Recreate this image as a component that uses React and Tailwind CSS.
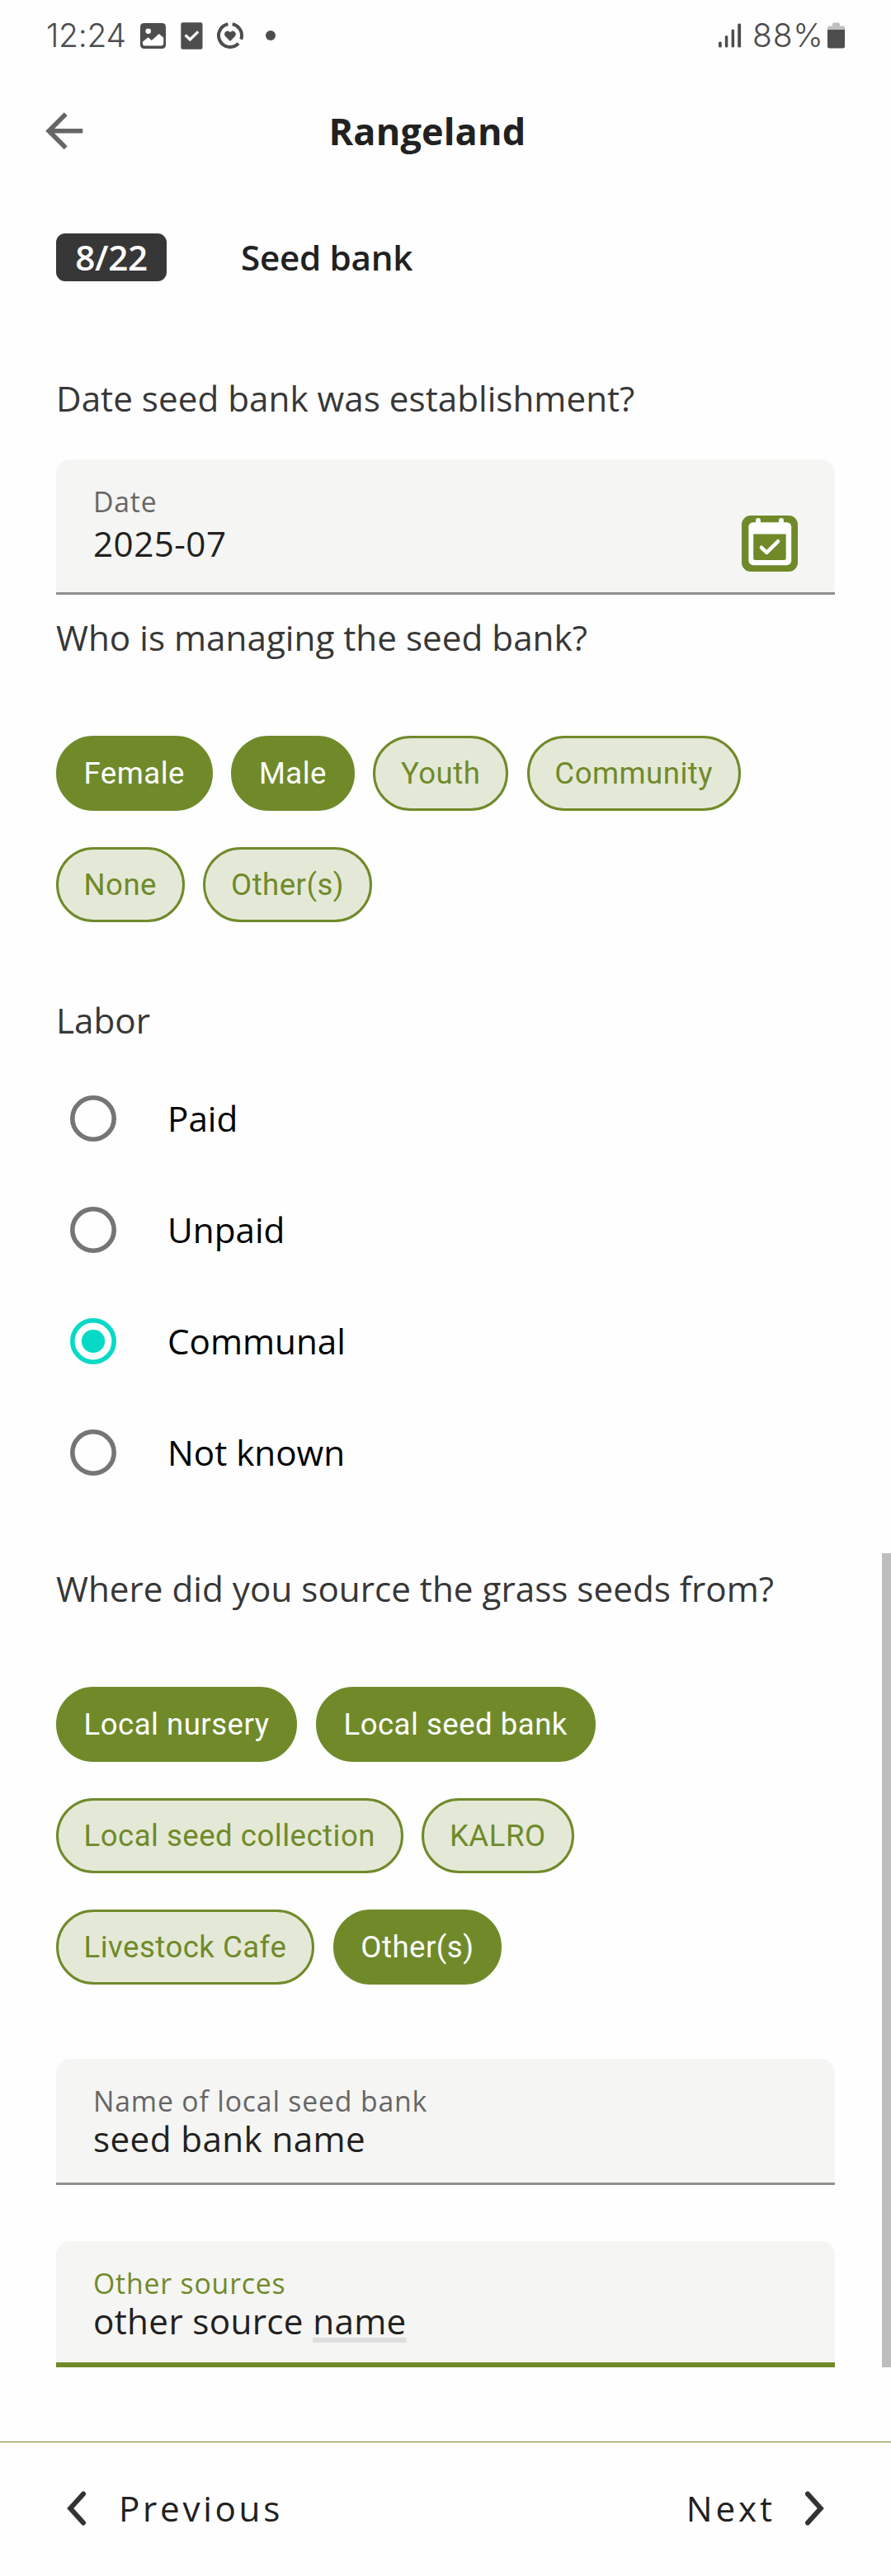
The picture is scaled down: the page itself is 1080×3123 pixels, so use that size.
import React from "react";

function StatusBar() {
  return (
    <div className="flex h-[86px] items-center pl-[56px] pr-[56px] font-['Inter',sans-serif] text-[39px] font-[330] leading-none text-[#4d4d4d]">
      <span className="w-[114px] pb-[2px] tracking-[-0.3px]">12:24</span>
      <svg width="31" height="31" viewBox="0 0 31 31">
        <rect width="31" height="31" rx="4.5" fill="#4d4d4d" />
        <circle cx="9.7" cy="9.7" r="3.3" fill="#fff" />
        <path d="M2.8 22.7 9.6 17.3 13.8 21 22.7 13 28.2 17.7V24.5a3 3 0 0 1-3 3H5.8a3 3 0 0 1-3-3z" fill="#fff" />
      </svg>
      <svg className="ml-[18px]" width="27" height="33" viewBox="0 0 27 33">
        <rect x="0.3" y="0.3" width="26.2" height="32.4" rx="2.2" fill="#4d4d4d" />
        <path d="M5.6 15.6 11.3 21 21.2 11.4" fill="none" stroke="#fff" strokeWidth="3.4" />
      </svg>
      <svg className="ml-[16px]" width="34" height="34" viewBox="0 0 34 34">
        <path d="M19.67 3.26A14 14 0 0 1 30.16 21.79M27.07 26.73A14 14 0 1 1 14.33 3.26" fill="none" stroke="#4d4d4d" strokeWidth="4" />
        <path d="M17 24 11.4 18.3C7.6 14.2 13.4 8.6 17 13.2 20.6 8.6 26.4 14.2 22.6 18.3z" fill="#4d4d4d" />
      </svg>
      <span className="ml-[26px] size-[12px] rounded-full bg-[#4d4d4d]" />
      <div className="flex-1" />
      <svg width="29" height="30" viewBox="0 0 29 30">
        <rect x="1" y="22.5" width="3.8" height="7" rx="1.6" fill="#4d4d4d" />
        <rect x="8.8" y="15" width="3.5" height="14.5" rx="1.6" fill="#4d4d4d" />
        <rect x="16.6" y="7.5" width="3.5" height="22" rx="1.6" fill="#4d4d4d" />
        <rect x="24.2" y="0.5" width="3.9" height="29" rx="1.6" fill="#4d4d4d" />
      </svg>
      <span className="ml-[13px] w-[91px] pb-[2px] tracking-[0.8px]">88%</span>
      <svg width="21" height="32" viewBox="0 0 21 32">
        <path d="M0 10V7a2.5 2.5 0 0 1 2.500-2.500H6V2.500A2 2 0 0 1 8 0.500h5a2 2 0 0 1 2 2v2h3.500A2.500 2.500 0 0 1 21 7v3z" fill="#c0c0c0" />
        <path d="M0 9H21V29a2.500 2.500 0 0 1-2.500 2.500H2.500A2.500 2.500 0 0 1 0 29z" fill="#4d4d4d" />
      </svg>
    </div>
  );
}

function Header() {
  return (
    <header className="flex h-[145px] items-center pl-[43.75px]">
      <svg width="67.5" height="67.5" viewBox="0 0 24 24" fill="#666">
        <path d="M20 11H7.83l5.590-5.590L12 4l-8 8 8 8 1.410-1.410L7.830 13H20v-2z" />
      </svg>
      <h1 className="ml-[287.250px] text-[45px] font-bold leading-[60px] tracking-[0.15px] text-[#212121]">Rangeland</h1>
    </header>
  );
}

function Question({ className, children }) {
  return <h2 className={`text-[42.19px] leading-[60px] tracking-[0.02px] text-[#373737] ${className}`}>{children}</h2>;
}

function Chip({ on, children }) {
  return (
    <button
      className={`flex h-[91px] items-center rounded-full border-[3px] border-[#708a2a] pl-[30.5px] pr-[31px] pt-[1px] font-['Roboto',sans-serif] text-[36.56px] tracking-[0.5px] whitespace-nowrap ${
        on ? "bg-[#708a2a] text-white" : "bg-[#e4e9d7] text-[#708a2a]"
      }`}
    >
      {children}
    </button>
  );
}

function Chips({ className, items }) {
  return (
    <div className={`flex flex-wrap gap-x-[22.5px] gap-y-[44px] ${className}`}>
      {items.map(([label, on]) => (
        <Chip key={label} on={on}>{label}</Chip>
      ))}
    </div>
  );
}

function Radio({ on, label }) {
  const color = on ? "#06dac6" : "#757575";
  return (
    <label className="flex h-[135px] items-center pl-[17px]">
      <svg width="56" height="56" viewBox="0 0 56 56">
        <circle cx="28" cy="28" r="25.2" fill="none" stroke={color} strokeWidth="5.6" />
        {on && <circle cx="28" cy="28" r="14.1" fill={color} />}
      </svg>
      <span className="ml-[62px] text-[42.19px] leading-[60px] text-black">{label}</span>
    </label>
  );
}

function CalendarIcon() {
  return (
    <svg width="68" height="68" viewBox="0 0 68 68">
      <rect width="68" height="68" rx="11" fill="#708a2a" />
      <path d="M20 6v6M48 6v6" stroke="#fff" strokeWidth="5.8" strokeLinecap="round" />
      <rect x="8.400" y="8.200" width="51.800" height="52" rx="5.600" fill="#fff" />
      <path d="M14.200 22.600H53.700V52a2 2 0 0 1-2 2H16.200a2 2 0 0 1-2-2z" fill="#708a2a" />
      <path d="M24 38.800 30.300 44.800 44 31.300" fill="none" stroke="#fff" strokeWidth="4.600" strokeLinecap="round" strokeLinejoin="round" />
    </svg>
  );
}

export default function App() {
  return (
    <div className="relative h-[3123px] w-[1080px] overflow-hidden bg-[#fefefe] font-['Open_Sans',sans-serif]">
      <StatusBar />
      <Header />
      <main className="px-[68px]">
        <div className="mt-[52px] flex h-[58px] items-center text-[42.19px] font-semibold tracking-[-0.3px]">
          <span className="flex h-[58px] w-[134px] items-center justify-center rounded-[11px] bg-[#373737] leading-[58px] text-white">8/22</span>
          <span className="ml-[90px] leading-[58px] text-[#212121]">Seed bank</span>
        </div>

        <Question className="mt-[112px]">Date seed bank was establishment?</Question>
        <div className="mt-[44px] flex h-[164px] items-start justify-between rounded-t-[17px] border-b-[3px] border-[#909090] bg-[#f5f5f3] pl-[45px] pr-[45px]">
          <div className="pt-[28px]">
            <div className="text-[33.75px] leading-[46px] tracking-[0.8px] text-[#666]">Date</div>
            <div className="text-[42.19px] leading-[56px] tracking-[0.45px] text-[#212121]">2025-07</div>
          </div>
          <div className="mt-[68px]"><CalendarIcon /></div>
        </div>

        <Question className="mt-[22px]">Who is managing the seed bank?</Question>
        <Chips
          className="mt-[89px]"
          items={[["Female", true], ["Male", true], ["Youth", false], ["Community", false], ["None", false], ["Other(s)", false]]}
        />

        <Question className="mt-[89px]">Labor</Question>
        <div className="mt-[21px]">
          <Radio label="Paid" />
          <Radio label="Unpaid" />
          <Radio label="Communal" on />
          <Radio label="Not known" />
        </div>

        <Question className="mt-[68px]">Where did you source the grass seeds from?</Question>
        <Chips
          className="mt-[89px]"
          items={[["Local nursery", true], ["Local seed bank", true], ["Local seed collection", false], ["KALRO", false], ["Livestock Cafe", false], ["Other(s)", true]]}
        />

        <div className="mt-[90px] h-[153px] rounded-t-[17px] border-b-[3px] border-[#909090] bg-[#f5f5f3] pl-[45px] pt-[31px]">
          <div className="text-[33.75px] leading-[40px] tracking-[0.84px] text-[#666]">Name of local seed bank</div>
          <div className="text-[42.19px] leading-[52px] tracking-[0.4px] text-[#212121]">seed bank name</div>
        </div>
        <div className="mt-[68px] h-[153px] rounded-t-[17px] border-b-[6px] border-[#708a2a] bg-[#f5f5f3] pl-[45px] pt-[31px]">
          <div className="text-[33.75px] leading-[40px] tracking-[0.84px] text-[#708a2a]">Other sources</div>
          <div className="text-[42.19px] leading-[52px] tracking-[0.35px] text-[#212121]">
            other source{" "}
            <span className="underline decoration-[#dedede] decoration-[5.5px] underline-offset-[4px] [text-decoration-skip-ink:none]">name</span>
          </div>
        </div>
      </main>

      <footer className="mt-[90px] flex h-[161px] items-center justify-between border-t border-[#708a2a] pl-[80px] pr-[80px] text-[42.19px] text-[#212121]">
        <button className="flex items-center">
          <svg width="25" height="42" viewBox="0 0 25 42">
            <path d="M21 3.500 5.200 21 21 38.500" fill="none" stroke="#333" strokeWidth="6" strokeLinecap="round" />
          </svg>
          <span className="ml-[39px] leading-[60px] tracking-[3.7px]">Previous</span>
        </button>
        <button className="flex items-center">
          <span className="mr-[35px] leading-[60px] tracking-[3.9px]">Next</span>
          <svg width="25" height="42" viewBox="0 0 25 42">
            <path d="M4 3.500 19.800 21 4 38.500" fill="none" stroke="#333" strokeWidth="6" strokeLinecap="round" />
          </svg>
        </button>
      </footer>

      <div className="absolute right-0 top-[1883px] h-[987px] w-[11px] bg-[#bdbdbd]" />
    </div>
  );
}
